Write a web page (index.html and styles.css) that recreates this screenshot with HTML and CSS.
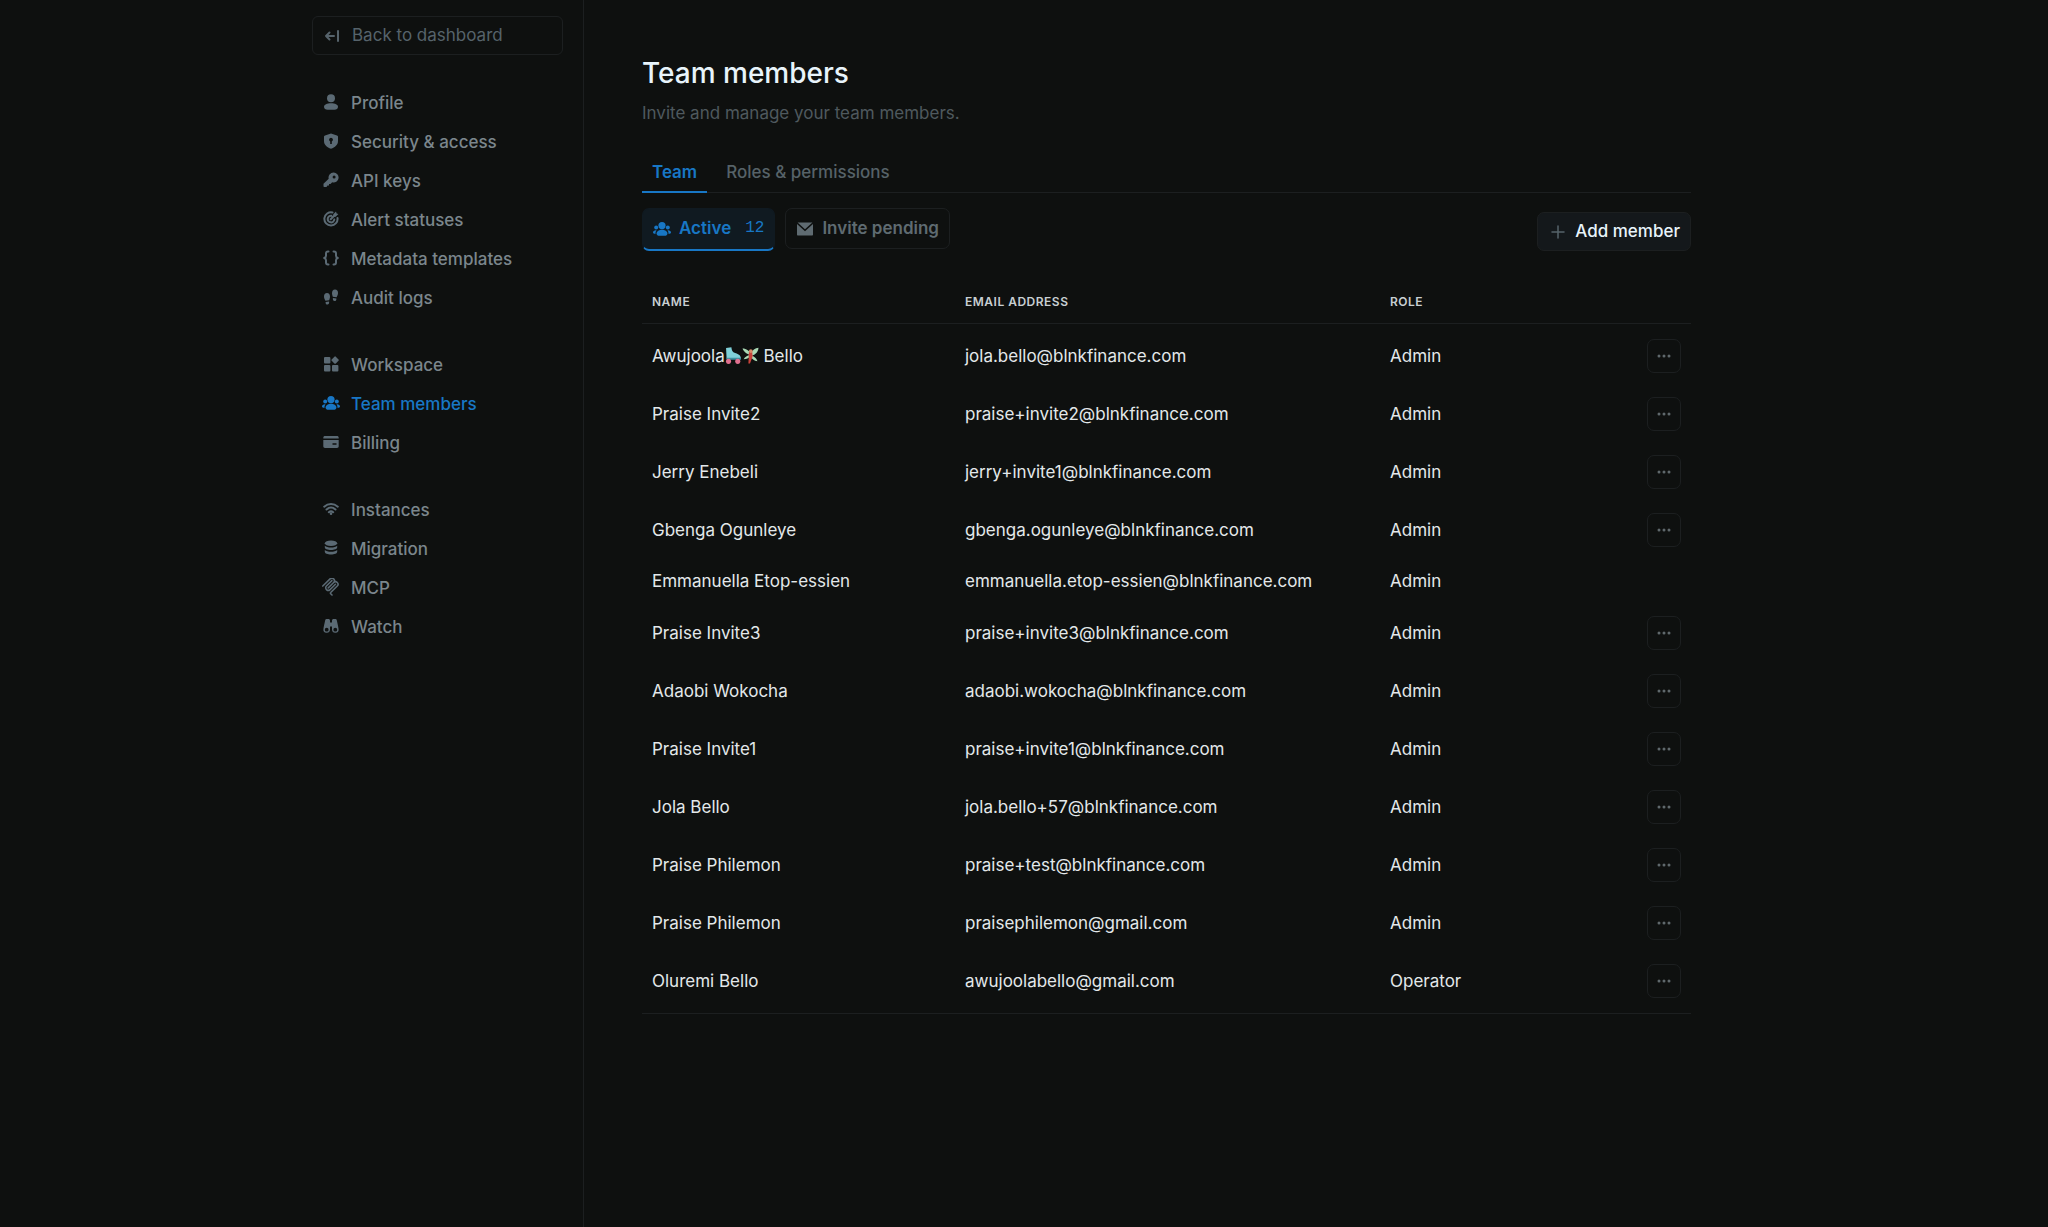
FILE: index.html
```html
<!DOCTYPE html>
<html lang="en">
<head>
    <meta charset="UTF-8">
    <meta name="viewport" content="width=device-width, initial-scale=1.0">
    <title>Team members</title>
    <link rel="stylesheet" href="styles.css">
</head>
<body>

<!-- shared icons -->
<svg class="sprite" aria-hidden="true">
    <symbol id="icon-users" viewBox="0 0 18 16">
        <circle cx="9" cy="4.6" r="3.600"/>
        <path d="M9 8.800c3 0 5.400 1.700 5.400 3.700 0 1.400-1.200 2.300-2.800 2.300H6.400c-1.600 0-2.800-.9-2.800-2.300 0-2 2.400-3.700 5.400-3.700z"/>
        <circle cx="3.200" cy="6.400" r="2"/>
        <circle cx="14.800" cy="6.400" r="2"/>
        <path d="M3.600 9.300C1.600 9 0 10 0 11.500c0 .8.900 1.300 2.600 1.300-.2-1.300.1-2.500 1-3.500zM14.400 9.300c2-.3 3.600.7 3.600 2.200 0 .8-.9 1.300-2.600 1.300.2-1.300-.1-2.500-1-3.500z"/>
    </symbol>
    <symbol id="icon-dots" viewBox="0 0 14 4">
        <circle cx="2" cy="2" r="1.500"/>
        <circle cx="7" cy="2" r="1.500"/>
        <circle cx="12" cy="2" r="1.500"/>
    </symbol>
</svg>

<div class="layout">
    <aside class="sidebar">
        <a href="#" class="back-link">
            <svg class="icon" viewBox="0 0 16 16"><path class="stroke thick" d="M14 3v10M10 8H2M5.500 4.500L2 8l3.500 3.500"/></svg>
            Back to dashboard
        </a>

        <nav>
            <ul class="nav-group">
                <li><a href="#">
                    <svg class="icon" viewBox="0 0 16 16"><circle cx="8" cy="4.200" r="4"/><path d="M8 9.300c4 0 7 1.500 7 3.500s-1.500 2.900-3.500 2.900h-7C2.500 15.700 1 14.800 1 12.800s3-3.500 7-3.500z"/></svg>
                    Profile</a></li>
                <li><a href="#">
                    <svg class="icon" viewBox="0 0 16 16"><path fill-rule="evenodd" d="M8 .5l6 1.900c.6.2 1 .6 1 1.200V8c0 4-3 6.400-7 7.700C4 14.400 1 12 1 8V3.600c0-.6.4-1 1-1.200zM8 4.700a2 2 0 0 0-.8 3.800V11h1.600V8.500A2 2 0 0 0 8 4.700z"/></svg>
                    Security &amp; access</a></li>
                <li><a href="#">
                    <svg class="icon" viewBox="0 0 16 16"><path fill-rule="evenodd" d="M10.500.5a5 5 0 1 1-1.300 9.800L7.500 12H6v1.500H4.500L3.500 15H1.200a.7.7 0 0 1-.7-.7v-2.600l5.200-4.900A5 5 0 0 1 10.500.5zm.6 2.900a1.500 1.500 0 1 0 0 3 1.500 1.500 0 0 0 0-3z"/></svg>
                    API keys</a></li>
                <li><a href="#">
                    <svg class="icon" viewBox="0 0 16 16"><path class="stroke thick" d="M9.500 1.500A6.600 6.600 0 1 0 14.500 7M8.300 4.800a3.300 3.300 0 1 0 3 3.700M7.700 8.300l4-4"/><path d="M10.300 5.700V3.300L13 .6l.6 1.800 1.800.6-2.700 2.700z"/></svg>
                    Alert statuses</a></li>
                <li><a href="#">
                    <svg class="icon" viewBox="0 0 16 16"><path class="stroke thick" d="M5.500 1.500H5C3.700 1.500 3 2.200 3 3.500v2.200C3 7 2.300 7.700 1.200 8 2.300 8.300 3 9 3 10.300v2.200c0 1.300.7 2 2 2h.5M10.500 1.500h.5c1.300 0 2 .7 2 2v2.200c0 1.300.7 2 1.800 2.300-1.100.3-1.800 1-1.800 2.300v2.200c0 1.300-.7 2-2 2h-.5"/></svg>
                    Metadata templates</a></li>
                <li><a href="#">
                    <svg class="icon" viewBox="0 0 16 16"><path d="M4 4c2 0 3 1.700 3 3.700 0 1.400-.5 2.300-.8 3.500l-3.800.5C1.500 10 1 9 1 7.500 1 5.500 2 4 4 4zM2.600 13l3.500-.5c.3 1.900-.4 3-1.600 3.100-1.200.1-2-.8-1.900-2.600zM12 .5c2 0 3 1.500 3 3.500 0 1.500-.5 2.500-1.400 4.200l-3.800-.5C9.500 6.500 9 5.600 9 4.200 9 2.200 10 .5 12 .5zM9.900 9l3.500.5c.1 1.800-.7 2.700-1.900 2.600-1.200-.1-1.900-1.200-1.600-3.100z"/></svg>
                    Audit logs</a></li>
            </ul>

            <ul class="nav-group">
                <li><a href="#">
                    <svg class="icon" viewBox="0 0 16 16"><rect x="1" y="1" width="6.400" height="6.400" rx="1"/><rect x="1" y="9" width="6.400" height="6.400" rx="1"/><rect x="9" y="9" width="6.400" height="6.400" rx="1"/><path d="M11.400.7a1 1 0 0 1 1.400 0L15.500 3.400a1 1 0 0 1 0 1.400l-2.700 2.700a1 1 0 0 1-1.400 0L8.700 4.800a1 1 0 0 1 0-1.400z"/></svg>
                    Workspace</a></li>
                <li><a href="#" class="active">
                    <svg class="icon wide"><use href="#icon-users"/></svg>
                    Team members</a></li>
                <li><a href="#">
                    <svg class="icon" viewBox="0 0 16 16"><path d="M2 2h12c1 0 1.700.7 1.700 1.700v.8H.3v-.8C.3 2.700 1 2 2 2z"/><path fill-rule="evenodd" d="M.3 6h15.400v6.300c0 1-.7 1.700-1.700 1.700H2c-1 0-1.700-.7-1.700-1.700zM9.500 9.300v1.500h4V9.300z"/></svg>
                    Billing</a></li>
            </ul>

            <ul class="nav-group">
                <li><a href="#">
                    <svg class="icon" viewBox="0 0 16 16"><path class="stroke thick" d="M1.200 5.700c4-3.500 9.600-3.500 13.600 0M3.500 8.500c2.700-2.300 6.300-2.300 9 0M5.800 11.200c1.300-1 3.100-1 4.400 0"/><circle cx="8" cy="12.700" r="1.300"/></svg>
                    Instances</a></li>
                <li><a href="#">
                    <svg class="icon" viewBox="0 0 16 16"><ellipse cx="8" cy="3.300" rx="6.200" ry="2.800"/><path d="M1.800 5.700c1.200 1.200 3.500 1.800 6.200 1.800s5-.6 6.200-1.800v1.500C14.200 8.900 11.400 10 8 10S1.800 8.900 1.800 7.200zM1.800 9.900c1.200 1.200 3.500 1.800 6.200 1.800s5-.6 6.200-1.800v1.800c0 1.700-2.800 2.800-6.200 2.800s-6.200-1.100-6.200-2.800z"/></svg>
                    Migration</a></li>
                <li><a href="#">
                    <svg class="icon wide" viewBox="1 1 22 23"><path class="stroke thick" d="M1.500 11.300l9.300-9.200a3.200 3.200 0 0 1 4.600 4.600l-7 7M8.500 13.600l6.900-6.900a3.200 3.200 0 0 1 4.600 4.600l-8.400 8.300a1 1 0 0 0 0 1.500l1.700 1.700M13.100 4.400L6.200 11.200a3.200 3.200 0 0 0 4.600 4.600l6.900-6.800"/></svg>
                    MCP</a></li>
                <li><a href="#">
                    <svg class="icon" viewBox="0 0 16 16"><path fill-rule="evenodd" d="M3.500 1h2C6.300 1 7 1.600 7 2.500v9.300a3.300 3.300 0 1 1-6.600-.6c.1-1.700 1-5.300 1.800-9C2.400 1.400 2.800 1 3.500 1zm.2 8.800a1.900 1.900 0 1 0 0 3.800 1.900 1.900 0 0 0 0-3.800zM12.500 1h-2C9.700 1 9 1.600 9 2.500v9.300a3.300 3.300 0 1 0 6.600-.6c-.1-1.700-1-5.300-1.800-9-.2-.8-.6-1.200-1.300-1.200zm-.2 8.800a1.900 1.900 0 1 1 0 3.800 1.900 1.900 0 0 1 0-3.800z"/><path d="M7 4.500h2v4H7z"/></svg>
                    Watch</a></li>
            </ul>
        </nav>
    </aside>

    <main class="content">
        <h1>Team members</h1>
        <p class="subtitle">Invite and manage your team members.</p>

        <div class="tabs">
            <a href="#" class="tab active">Team</a>
            <a href="#" class="tab">Roles &amp; permissions</a>
        </div>

        <div class="toolbar">
            <div class="filters">
                <button type="button" class="filter active">
                    <svg class="icon"><use href="#icon-users"/></svg>
                    Active
                    <span class="count">12</span>
                </button>
                <button type="button" class="filter">
                    <svg class="icon" viewBox="0 0 16 16"><path d="M.6 1.500h14.800L8 8.300zM0 3l8 7.200L16 3v10.500c0 .6-.4 1-1 1H1c-.6 0-1-.4-1-1z"/></svg>
                    Invite pending
                </button>
            </div>
            <button type="button" class="add-btn">
                <svg class="icon" viewBox="0 0 16 16"><path class="stroke" d="M8 2v12M2 8h12"/></svg>
                Add member
            </button>
        </div>

        <table>
            <colgroup>
                <col class="col-name">
                <col class="col-email">
                <col>
                <col class="col-actions">
            </colgroup>
            <thead>
                <tr><th>NAME</th><th>EMAIL ADDRESS</th><th>ROLE</th><th></th></tr>
            </thead>
            <tbody>
                <tr>
                    <td>Awujoola<svg class="emoji" viewBox="0 0 16 16" role="img" aria-label="roller skate"><path fill="#7fd0d8" d="M1 1l5-.8c.3 3 1 4.500 3.500 5.500 2.500.9 5.300 1.600 5.500 5.300H1.500z"/><path fill="#3f8f9f" d="M1.300 10h13.700v2H1.600z"/><circle fill="#e0708f" cx="3.300" cy="13.500" r="2.400"/><circle fill="#e0708f" cx="12" cy="13.500" r="2.400"/></svg><svg class="emoji" viewBox="0 0 16 16" role="img" aria-label="fairy"><path fill="#a9d8b4" d="M7.500 7.500C5 7 1.500 4.500.5 1.500 4 1.500 7.500 4 8 6.500 9.500 3 12.500.8 15.500.6 15.500 4 13 7 9.500 8c2.500 1.500 4.500 3 5 5.500C11.500 13 9 11 8 8.500 6.500 10.500 4 11.500 1.500 11.500 2.500 9.500 5 8 7.500 7.500z"/><path fill="#c8423a" d="M6.500 4.500l3-.5.5 5-2.500 6.500H6l.3-5.500z"/><circle fill="#d88a68" cx="8.300" cy="3.800" r="1.800"/></svg> Bello</td>
                    <td>jola.bello@blnkfinance.com</td>
                    <td>Admin</td>
                    <td><button type="button" class="more" aria-label="More options"><svg><use href="#icon-dots"/></svg></button></td>
                </tr>
                <tr>
                    <td>Praise Invite2</td>
                    <td>praise+invite2@blnkfinance.com</td>
                    <td>Admin</td>
                    <td><button type="button" class="more" aria-label="More options"><svg><use href="#icon-dots"/></svg></button></td>
                </tr>
                <tr>
                    <td>Jerry Enebeli</td>
                    <td>jerry+invite1@blnkfinance.com</td>
                    <td>Admin</td>
                    <td><button type="button" class="more" aria-label="More options"><svg><use href="#icon-dots"/></svg></button></td>
                </tr>
                <tr>
                    <td>Gbenga Ogunleye</td>
                    <td>gbenga.ogunleye@blnkfinance.com</td>
                    <td>Admin</td>
                    <td><button type="button" class="more" aria-label="More options"><svg><use href="#icon-dots"/></svg></button></td>
                </tr>
                <tr>
                    <td>Emmanuella Etop-essien</td>
                    <td>emmanuella.etop-essien@blnkfinance.com</td>
                    <td>Admin</td>
                    <td></td>
                </tr>
                <tr>
                    <td>Praise Invite3</td>
                    <td>praise+invite3@blnkfinance.com</td>
                    <td>Admin</td>
                    <td><button type="button" class="more" aria-label="More options"><svg><use href="#icon-dots"/></svg></button></td>
                </tr>
                <tr>
                    <td>Adaobi Wokocha</td>
                    <td>adaobi.wokocha@blnkfinance.com</td>
                    <td>Admin</td>
                    <td><button type="button" class="more" aria-label="More options"><svg><use href="#icon-dots"/></svg></button></td>
                </tr>
                <tr>
                    <td>Praise Invite1</td>
                    <td>praise+invite1@blnkfinance.com</td>
                    <td>Admin</td>
                    <td><button type="button" class="more" aria-label="More options"><svg><use href="#icon-dots"/></svg></button></td>
                </tr>
                <tr>
                    <td>Jola Bello</td>
                    <td>jola.bello+57@blnkfinance.com</td>
                    <td>Admin</td>
                    <td><button type="button" class="more" aria-label="More options"><svg><use href="#icon-dots"/></svg></button></td>
                </tr>
                <tr>
                    <td>Praise Philemon</td>
                    <td>praise+test@blnkfinance.com</td>
                    <td>Admin</td>
                    <td><button type="button" class="more" aria-label="More options"><svg><use href="#icon-dots"/></svg></button></td>
                </tr>
                <tr>
                    <td>Praise Philemon</td>
                    <td>praisephilemon@gmail.com</td>
                    <td>Admin</td>
                    <td><button type="button" class="more" aria-label="More options"><svg><use href="#icon-dots"/></svg></button></td>
                </tr>
                <tr>
                    <td>Oluremi Bello</td>
                    <td>awujoolabello@gmail.com</td>
                    <td>Operator</td>
                    <td><button type="button" class="more" aria-label="More options"><svg><use href="#icon-dots"/></svg></button></td>
                </tr>
            </tbody>
        </table>
    </main>
</div>

</body>
</html>
```
FILE: styles.css
```css
* {
    box-sizing: border-box;
}

body {
    margin: 0;
    background-color: #0e100f;
    color: #e3e8ea;
    font-family: Inter, "Liberation Sans", sans-serif;
    font-size: 17px;
    line-height: 21px;
}

a {
    color: inherit;
    text-decoration: none;
}

button {
    font-family: inherit;
    font-size: inherit;
    line-height: inherit;
    cursor: pointer;
}

.sprite {
    display: none;
}

.icon {
    width: 16px;
    height: 16px;
    flex-shrink: 0;
    fill: currentColor;
}

.icon.wide {
    width: 18px;
    height: 18px;
    margin-left: -1px;
    margin-right: -1px;
}

.stroke {
    fill: none;
    stroke: currentColor;
    stroke-width: 1.5;
    stroke-linecap: round;
    stroke-linejoin: round;
}

.thick {
    stroke-width: 2;
}

.layout {
    display: flex;
    max-width: 1424px;
    min-height: 100vh;
    margin: 0 auto;
}

/* Sidebar */
.sidebar {
    width: 272px;
    flex-shrink: 0;
    padding: 16px 20px 16px 0;
    border-right: 1px solid #1c1f20;
}

.back-link {
    display: flex;
    align-items: center;
    gap: 12px;
    margin-bottom: 29px;
    padding: 8px 11px;
    border: 1px solid #1c1f20;
    border-radius: 6px;
    color: #56636b;
}

.nav-group {
    list-style: none;
    margin: 0 0 28px;
    padding: 0;
}

.nav-group a {
    display: flex;
    align-items: center;
    gap: 12px;
    height: 39px;
    padding: 0 11px;
    color: #7b868c;
    font-weight: 500;
}

.nav-group .icon {
    color: #5b6a74;
    margin-bottom: 3px;
}

.nav-group .active,
.nav-group .active .icon {
    color: #1877c5;
}

/* Main */
.content {
    flex: 1;
    padding: 54px 45px 54px 58px;
}

h1 {
    margin: 0;
    color: #e8f4fb;
    font-size: 28px;
    font-weight: 500;
    line-height: 38px;
}

.subtitle {
    margin: 11px 0 0;
    color: #4f595e;
}

.tabs {
    display: flex;
    gap: 9px;
    margin-top: 28px;
    border-bottom: 1px solid #1c1f20;
}

.tab {
    padding: 10px 10px 8px;
    margin-bottom: -1px;
    border-bottom: 2px solid transparent;
    color: #566268;
    font-weight: 500;
}

.tab.active {
    color: #1877c5;
    border-bottom-color: #1877c5;
    font-weight: 600;
}

.toolbar {
    display: flex;
    justify-content: space-between;
    align-items: flex-end;
    margin-top: 15px;
}

.filters {
    display: flex;
    align-items: flex-start;
    gap: 10px;
}

.filter,
.add-btn {
    display: flex;
    align-items: center;
    gap: 8px;
    border: 1px solid #1c1f20;
    border-radius: 7px;
}

.filter {
    padding: 9px 10px;
    background: none;
    color: #5f6b71;
    font-weight: 600;
}

.filter .icon {
    width: 18px;
}

.filter.active {
    padding-bottom: 10px;
    background-color: #101a21;
    border-color: #101a21;
    border-bottom: 2px solid #1877c5;
    color: #1877c5;
}

.filter .count {
    margin-left: 6px;
    font-family: "Liberation Mono", monospace;
    font-size: 16px;
    font-weight: 400;
}

.add-btn {
    gap: 9px;
    padding: 8px 10px 8px 12px;
    background-color: #14181b;
    color: #e8f4fb;
    font-weight: 500;
}

.add-btn .icon {
    color: #56636b;
}

/* Members table */
table {
    width: 100%;
    margin-top: 33px;
    border-collapse: separate;
    border-spacing: 0;
    border-bottom: 1px solid #1c1f20;
    table-layout: fixed;
}

.col-name {
    width: 313px;
}

.col-email {
    width: 425px;
}

.col-actions {
    width: 54px;
}

th {
    height: 40px;
    padding: 0 10px 5px;
    border-bottom: 1px solid #1c1f20;
    color: #c8cfd2;
    font-size: 12px;
    font-weight: 600;
    letter-spacing: 0.5px;
    text-align: left;
}

tbody::before,
tbody::after {
    content: "";
    display: table-row;
    height: 3px;
}

td {
    padding: 12px 10px;
    vertical-align: middle;
}

.emoji {
    width: 17px;
    height: 17px;
    vertical-align: -2px;
}

.more {
    display: flex;
    align-items: center;
    justify-content: center;
    width: 34px;
    height: 34px;
    padding: 0;
    background: none;
    border: 1px solid #1c1f20;
    border-radius: 7px;
    color: #5f686c;
}

.more svg {
    width: 14px;
    height: 4px;
    fill: currentColor;
}
```
